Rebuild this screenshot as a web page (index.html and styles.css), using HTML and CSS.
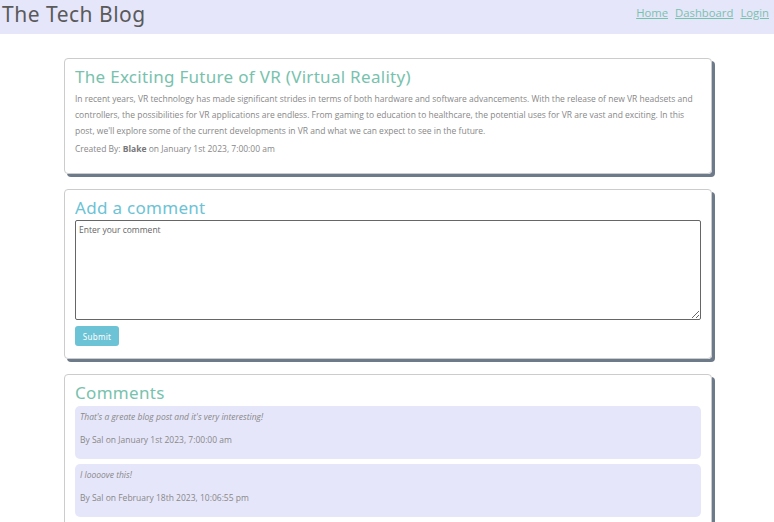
FILE: index.html
```html
<!DOCTYPE html>
<html lang="en">
<head>
<meta charset="utf-8">
<title>The Tech Blog</title>
<link rel="stylesheet" href="styles.css">
</head>
<body>
<header class="topbar">
  <h1 class="brand">The Tech Blog</h1>
  <nav class="nav">
    <a href="#">Home</a>
    <a href="#">Dashboard</a>
    <a href="#">Login</a>
  </nav>
</header>
<main class="content">
  <section class="card">
    <h2 class="card-title primary">The Exciting Future of VR (Virtual Reality)</h2>
    <p class="post-body">In recent years, VR technology has made significant strides in terms of both hardware and software advancements. With the release of new VR headsets and controllers, the possibilities for VR applications are endless. From gaming to education to healthcare, the potential uses for VR are vast and exciting. In this post, we'll explore some of the current developments in VR and what we can expect to see in the future.</p>
    <p class="meta">Created By: <b>Blake</b> on January 1st 2023, 7:00:00 am</p>
  </section>
  <section class="card card-form">
    <h2 class="card-title info">Add a comment</h2>
    <form class="comment-form">
      <textarea class="comment-input" placeholder="Enter your comment"></textarea>
      <button type="button" class="btn">Submit</button>
    </form>
  </section>
  <section class="card">
    <h2 class="card-title primary">Comments</h2>
    <div class="comment">
      <p class="comment-text">That's a greate blog post and it's very interesting!</p>
      <p class="comment-meta">By Sal on January 1st 2023, 7:00:00 am</p>
    </div>
    <div class="comment">
      <p class="comment-text">I loooove this!</p>
      <p class="comment-meta">By Sal on February 18th 2023, 10:06:55 pm</p>
    </div>
  </section>
</main>
</body>
</html>
```

FILE: styles.css
```css
* { box-sizing: border-box; }
body {
  margin: 0;
  font-family: "Open Sans", "Noto Sans", sans-serif;
  color: #888;
  background: #fff;
}
.topbar {
  background: #e6e6fa;
  height: 34px;
  display: flex;
  justify-content: space-between;
  align-items: flex-start;
  padding: 0 5px 0 2px;
}
.brand {
  margin: 0;
  font-family: "Noto Sans", sans-serif;
  font-weight: 400;
  font-size: 21px;
  letter-spacing: 0.5px;
  line-height: 28px;
  color: #5a5a5a;
}
.nav {
  display: flex;
  gap: 7px;
  font-size: 11.3px;
  line-height: 25px;
}
.nav a { color: #78c2ad; }
.content {
  width: 648px;
  margin: 24px 0 0 calc(50% - 323px);
  display: flex;
  flex-direction: column;
  gap: 15px;
}
.card {
  border: 1px solid #ccc;
  border-radius: 4px;
  box-shadow: 3px 3px 0 #6c7a89;
  padding: 8px 10px 11px;
}
.card-form { padding-bottom: 12px; }
.card-title {
  margin: 0;
  font-family: "Noto Sans", sans-serif;
  font-weight: 400;
  font-size: 17px;
  letter-spacing: 0.3px;
  line-height: 20px;
}
.primary { color: #78c2ad; }
.info { color: #6cc3d5; }
.post-body {
  margin: 4px 0 0;
  font-size: 8.5px;
  line-height: 16px;
}
.meta {
  margin: 2px 0 5px;
  font-size: 8.5px;
  line-height: 16px;
}
.meta b { color: #777; }
.comment-form { margin-top: 2px; }
.comment-input {
  display: block;
  width: 100%;
  height: 100px;
  border: 1px solid #666;
  border-radius: 2px;
  font-family: "Open Sans", sans-serif;
  font-size: 8.5px;
  padding: 3px;
  resize: vertical;
}
.comment-input::placeholder { color: #666; }
.btn {
  display: block;
  margin-top: 6px;
  background: #6cc3d5;
  color: #fff;
  border: 0;
  border-radius: 3px;
  font-family: "Noto Sans", sans-serif;
  font-size: 8px;
  letter-spacing: 0.3px;
  width: 44px;
  height: 20px;
  padding: 0;
}
.comment {
  background: #e6e6fa;
  border-radius: 5px;
  padding: 3px 5px 11px;
  margin-top: 3px;
}
.comment + .comment { margin-top: 5px; }
.comment-text {
  margin: 0;
  font-style: italic;
  font-size: 8.5px;
  line-height: 16px;
}
.comment-meta {
  margin: 7px 0 0;
  font-size: 8.5px;
  line-height: 16px;
}
```
